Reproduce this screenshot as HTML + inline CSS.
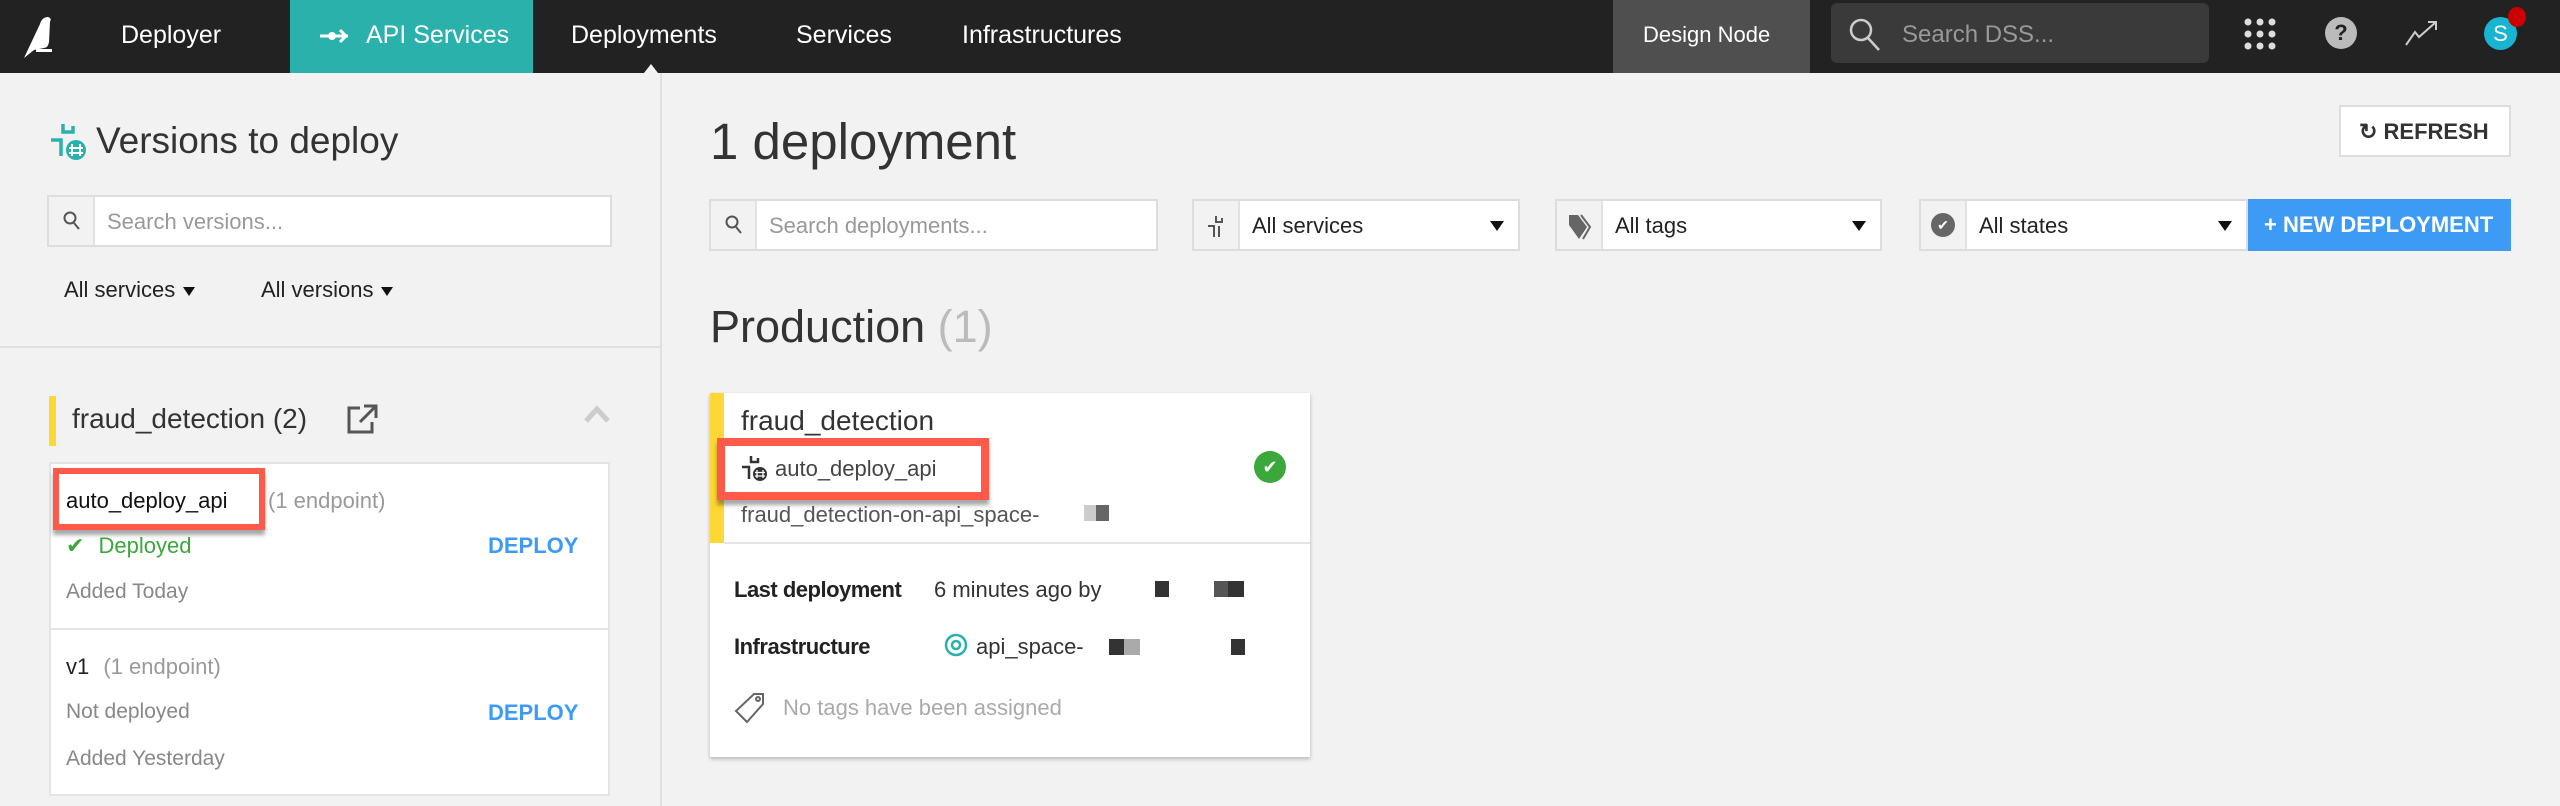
<!DOCTYPE html>
<html><head><meta charset="utf-8"><style>
*{box-sizing:border-box;margin:0;padding:0}
body{width:2560px;height:806px;overflow:hidden;background:#f2f2f2;font-family:"Liberation Sans",sans-serif;position:relative;color:#333}
.a{position:absolute;white-space:nowrap}
.nav{position:absolute;left:0;top:0;width:2560px;height:73px;background:#222}
.nt{position:absolute;top:21px;font-size:25px;color:#fff}
.inp{position:absolute;background:#fff;border:2px solid #ddd;height:52px}
.inp .ic{position:absolute;left:0;top:0;bottom:0;width:46px;background:#f2f2f2;border-right:2px solid #e2e2e2}
.inp .tx{position:absolute;left:58px;top:12px;font-size:22px;color:#999}
.sel .tx{color:#222}
.car{position:absolute;right:14px;top:20px;width:0;height:0;border-left:7px solid transparent;border-right:7px solid transparent;border-top:10px solid #111}
.ca{display:inline-block;width:0;height:0;border-left:6px solid transparent;border-right:6px solid transparent;border-top:9px solid #111;margin-left:8px;vertical-align:middle}
.blk{position:absolute;background:#333}
</style></head><body>
<div class="nav">
  <svg class="a" style="left:22px;top:14px" width="42" height="44" viewBox="0 0 42 44"><path d="M2 44 L18 10 Q20 3 26 3 Q30 4 28 8 L27 28 Q26 34 22 34 L12 36 Z" fill="#fff"/><rect x="14" y="35" width="16" height="3" fill="#fff"/></svg>
  <div class="nt" style="left:121px">Deployer</div>
  <div class="a" style="left:290px;top:0;width:243px;height:73px;background:#2bb1ac"></div>
  <svg class="a" style="left:318px;top:27px" width="34" height="18" viewBox="0 0 34 18"><path d="M2 9H30M22 3l6 6-6 6" stroke="#fff" stroke-width="3" fill="none"/><circle cx="14" cy="9" r="4" fill="#fff"/></svg>
  <div class="nt" style="left:366px">API Services</div>
  <div class="nt" style="left:571px">Deployments</div>
  <div class="a" style="left:644px;top:64px;width:0;height:0;border-left:7px solid transparent;border-right:7px solid transparent;border-bottom:9px solid #f2f2f2"></div>
  <div class="nt" style="left:796px">Services</div>
  <div class="nt" style="left:962px">Infrastructures</div>
  <div class="a" style="left:1613px;top:0;width:197px;height:73px;background:#4f4f4f"></div>
  <div class="nt" style="left:1643px;font-size:22px;top:22px">Design Node</div>
  <div class="a" style="left:1831px;top:3px;width:378px;height:60px;background:#3a3a3a;border-radius:6px"></div>
  <svg class="a" style="left:1848px;top:17px" width="34" height="34" viewBox="0 0 34 34"><circle cx="13" cy="13" r="10" stroke="#ccc" stroke-width="2.5" fill="none"/><path d="M20 21L31 33" stroke="#ccc" stroke-width="2.5"/></svg>
  <div class="nt" style="left:1902px;top:21px;color:#999;font-size:24px">Search DSS...</div>
  <svg class="a" style="left:2243px;top:17px" width="34" height="34" viewBox="0 0 34 34" fill="#ddd"><circle cx="5" cy="5" r="3.5"/><circle cx="17" cy="5" r="3.5"/><circle cx="29" cy="5" r="3.5"/><circle cx="5" cy="17" r="3.5"/><circle cx="17" cy="17" r="3.5"/><circle cx="29" cy="17" r="3.5"/><circle cx="5" cy="29" r="3.5"/><circle cx="17" cy="29" r="3.5"/><circle cx="29" cy="29" r="3.5"/></svg>
  <div class="a" style="left:2325px;top:17px;width:32px;height:32px;border-radius:50%;background:#bbb;color:#222;font-weight:bold;font-size:22px;text-align:center;line-height:32px">?</div>
  <svg class="a" style="left:2405px;top:20px" width="34" height="26" viewBox="0 0 34 26"><path d="M1 25L10 12 14 17 31 2M23 2H31V10" stroke="#ccc" stroke-width="2" fill="none"/></svg>
  <div class="a" style="left:2484px;top:17px;width:33px;height:33px;border-radius:50%;background:#1ab4d3;color:#fff;font-size:22px;text-align:center;line-height:33px">S</div>
  <div class="a" style="left:2508px;top:7px;width:18px;height:20px;border-radius:50%;background:#c00"></div>
</div>

<div class="a" style="left:660px;top:73px;width:2px;height:733px;background:#e0e0e0"></div>
<svg class="a" style="left:49px;top:122px" width="40" height="40" viewBox="0 0 40 40" fill="none" stroke="#2bb1ac" stroke-width="3.5"><path d="M14 2V10H24V4M2 18H12V34"/><circle cx="27" cy="28" r="10" fill="#2bb1ac" stroke="none"/><path d="M23 22V34M31 22V34M20 26H34M20 31H34" stroke="#fff" stroke-width="2"/></svg>
<div class="a" style="left:96px;top:120px;font-size:37px;color:#333">Versions to deploy</div>
<div class="inp" style="left:47px;top:195px;width:565px"><div class="ic"></div><svg class="a" style="left:14px;top:14px" width="18" height="20" viewBox="0 0 18 20"><circle cx="7" cy="7" r="5.5" stroke="#555" stroke-width="2" fill="none"/><path d="M11 12L16 18" stroke="#555" stroke-width="2"/></svg><div class="tx">Search versions...</div></div>
<div class="a" style="left:64px;top:277px;font-size:22px;color:#222">All services<span class="ca"></span></div>
<div class="a" style="left:261px;top:277px;font-size:22px;color:#222">All versions<span class="ca"></span></div>
<div class="a" style="left:0;top:346px;width:660px;height:2px;background:#e0e0e0"></div>

<div class="a" style="left:49px;top:396px;width:7px;height:50px;background:#fdd835"></div>
<div class="a" style="left:72px;top:403px;font-size:28px;color:#333">fraud_detection (2)</div>
<svg class="a" style="left:346px;top:404px" width="32" height="30" viewBox="0 0 32 30" fill="none" stroke="#555" stroke-width="3"><path d="M14 4H3V28H26V18M18 2H30V14M30 2L14 18"/></svg>
<svg class="a" style="left:583px;top:405px" width="28" height="18" viewBox="0 0 28 18"><path d="M3 16L14 4 25 16" stroke="#ccc" stroke-width="5" fill="none"/></svg>

<div class="a" style="left:49px;top:462px;width:561px;height:334px;background:#fff;border:2px solid #e4e4e4"></div>
<div class="a" style="left:49px;top:628px;width:561px;height:2px;background:#e4e4e4"></div>
<div class="a" style="left:53px;top:468px;width:212px;height:62px;background:#fff;border:6px solid #fd5a4a;box-shadow:0 5px 4px rgba(0,0,0,.35)"></div>
<div class="a" style="left:66px;top:488px;font-size:22px;color:#111">auto_deploy_api</div>
<div class="a" style="left:268px;top:488px;font-size:22px;color:#999">(1 endpoint)</div>
<div class="a" style="left:66px;top:533px;font-size:22px;color:#3aa83a">✔ <span style="margin-left:8px">Deployed</span></div>
<div class="a" style="left:488px;top:533px;font-size:22px;color:#3d9bf5;font-weight:bold">DEPLOY</div>
<div class="a" style="left:66px;top:580px;font-size:21px;color:#888">Added Today</div>
<div class="a" style="left:66px;top:654px;font-size:22px;color:#222">v1 <span style="color:#999;margin-left:8px">(1 endpoint)</span></div>
<div class="a" style="left:66px;top:700px;font-size:21px;color:#888">Not deployed</div>
<div class="a" style="left:488px;top:700px;font-size:22px;color:#3d9bf5;font-weight:bold">DEPLOY</div>
<div class="a" style="left:66px;top:747px;font-size:21px;color:#888">Added Yesterday</div>

<div class="a" style="left:710px;top:112px;font-size:51px;color:#333">1 deployment</div>
<div class="a" style="left:2339px;top:105px;width:172px;height:52px;background:#fff;border:2px solid #ddd;font-size:22px;font-weight:bold;color:#333;padding:12px 0 0 18px">↻ REFRESH</div>
<div class="inp" style="left:709px;top:199px;width:449px"><div class="ic"></div><svg class="a" style="left:14px;top:14px" width="18" height="20" viewBox="0 0 18 20"><circle cx="7" cy="7" r="5.5" stroke="#555" stroke-width="2" fill="none"/><path d="M11 12L16 18" stroke="#555" stroke-width="2"/></svg><div class="tx">Search deployments...</div></div>
<div class="inp sel" style="left:1192px;top:199px;width:328px"><div class="ic"></div><svg class="a" style="left:12px;top:14px" width="22" height="24" viewBox="0 0 22 24" fill="none" stroke="#555" stroke-width="2"><path d="M10 1V7H16V3M2 11H8V22M13 11V22"/></svg><div class="tx">All services</div><div class="car"></div></div>
<div class="inp sel" style="left:1555px;top:199px;width:327px"><div class="ic"></div><svg class="a" style="left:10px;top:12px" width="26" height="28" viewBox="0 0 26 28"><path d="M2 2H11L20 14 12 26 2 12Z" fill="#666"/><path d="M14 2L23 14 16 26" stroke="#666" stroke-width="2" fill="none"/></svg><div class="tx">All tags</div><div class="car"></div></div>
<div class="inp sel" style="left:1919px;top:199px;width:329px"><div class="ic"></div><div class="a" style="left:10px;top:12px;width:24px;height:24px;border-radius:50%;background:#666;color:#fff;font-size:14px;text-align:center;line-height:24px">✔</div><div class="tx">All states</div><div class="car"></div></div>
<div class="a" style="left:2248px;top:199px;width:263px;height:52px;background:#3d9bf5;color:#fff;font-size:22px;font-weight:bold;padding:13px 0 0 16px">+ NEW DEPLOYMENT</div>

<div class="a" style="left:710px;top:301px;font-size:45px;color:#333">Production <span style="color:#bbb">(1)</span></div>

<div class="a" style="left:710px;top:393px;width:600px;height:364px;background:#fff;box-shadow:0 2px 4px rgba(0,0,0,.25)"></div>
<div class="a" style="left:710px;top:393px;width:14px;height:150px;background:#fdd835"></div>
<div class="a" style="left:724px;top:542px;width:586px;height:2px;background:#e4e4e4"></div>
<div class="a" style="left:741px;top:405px;font-size:28px;color:#333">fraud_detection</div>
<div class="a" style="left:717px;top:438px;width:272px;height:62px;background:#fff;border:8px solid #fd5a4a;box-shadow:0 5px 4px rgba(0,0,0,.35)"></div>
<svg class="a" style="left:741px;top:455px" width="28" height="28" viewBox="0 0 28 28" fill="none" stroke="#333" stroke-width="2.5"><path d="M10 1V7H17V3M1 12H8V24"/><circle cx="19" cy="19" r="7" fill="#333" stroke="none"/><path d="M16 15V23M22 15V23M14 17.5H24M14 21H24" stroke="#fff" stroke-width="1.3"/></svg>
<div class="a" style="left:775px;top:456px;font-size:22px;color:#444">auto_deploy_api</div>
<div class="a" style="left:1254px;top:451px;width:32px;height:32px;border-radius:50%;background:#3aa83a;color:#fff;font-size:18px;text-align:center;line-height:32px">✔</div>
<div class="a" style="left:741px;top:502px;font-size:22px;color:#555">fraud_detection-on-api_space-</div>
<div class="a" style="left:1084px;top:505px;width:12px;height:16px;background:#ccc"></div><div class="a" style="left:1096px;top:505px;width:13px;height:16px;background:#666"></div>
<div class="a" style="left:734px;top:577px;font-size:22px;color:#222;font-weight:bold;letter-spacing:-0.5px">Last deployment</div>
<div class="a" style="left:934px;top:577px;font-size:22px;color:#333">6 minutes ago by</div>
<div class="blk" style="left:1155px;top:581px;width:14px;height:16px"></div>
<div class="blk" style="left:1214px;top:581px;width:14px;height:16px;background:#555"></div><div class="blk" style="left:1228px;top:581px;width:16px;height:16px"></div>
<div class="a" style="left:734px;top:634px;font-size:22px;color:#222;font-weight:bold;letter-spacing:-0.5px">Infrastructure</div>
<svg class="a" style="left:944px;top:632px" width="24" height="26" viewBox="0 0 24 26" fill="none" stroke="#2bb1ac" stroke-width="2.5"><circle cx="12" cy="13" r="10"/><circle cx="12" cy="13" r="4"/></svg>
<div class="a" style="left:976px;top:634px;font-size:22px;color:#333">api_space-</div>
<div class="blk" style="left:1109px;top:639px;width:15px;height:16px"></div><div class="blk" style="left:1124px;top:639px;width:16px;height:16px;background:#aaa"></div>
<div class="blk" style="left:1231px;top:639px;width:14px;height:16px"></div>
<svg class="a" style="left:734px;top:692px" width="32" height="32" viewBox="0 0 32 32" fill="none" stroke="#666" stroke-width="2"><path d="M20 2H29V12L13 30 2 19Z"/><circle cx="24" cy="7" r="2"/></svg>
<div class="a" style="left:783px;top:695px;font-size:22px;color:#aaa">No tags have been assigned</div>
</body></html>
